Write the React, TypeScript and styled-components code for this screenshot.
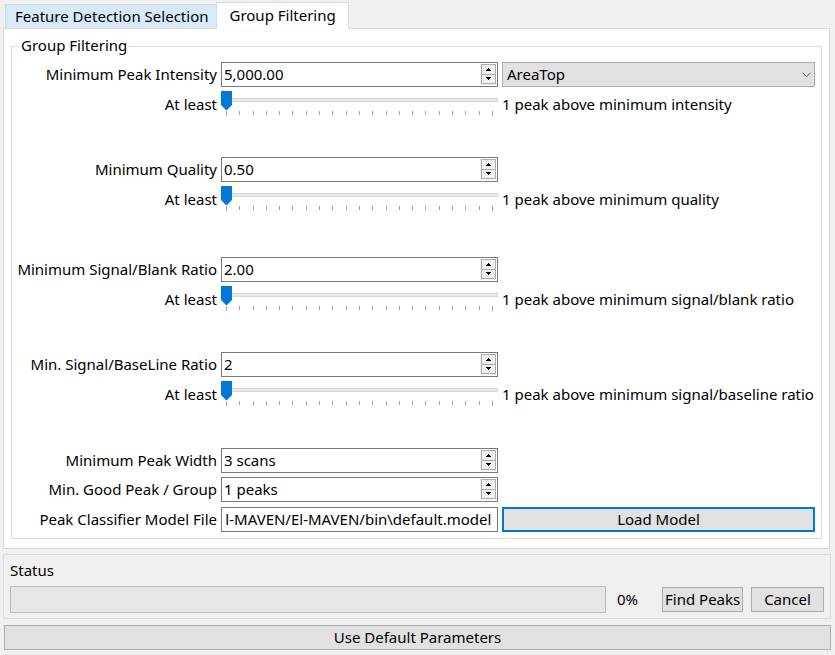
import React, { useEffect, useRef, useState } from 'react';
import styled, { createGlobalStyle, css } from 'styled-components';

const GlobalStyle = createGlobalStyle`
  *, *::before, *::after { box-sizing: border-box; }
  body { margin: 0; background: #f0f0f0; }
  body, button, input, select, output {
    font-family: "Noto Sans", "Open Sans", sans-serif;
    font-size: 15px;
    line-height: 20px;
    color: #000;
  }
`;

const Page = styled.main`
  display: flex;
  flex-direction: column;
  padding: 2px 4px 4px 3px;
`;

const TabList = styled.div`
  display: flex;
  align-items: flex-end;
  padding-left: 2px;
`;

const Tab = styled.button<{ $active: boolean }>`
  position: relative;
  margin: 0;
  border: 1px solid #d9d9d9;
  border-bottom: 0;
  white-space: nowrap;
  ${({ $active }) =>
    $active
      ? css`
          height: 27px;
          padding: 1px 12px 4px;
          margin-bottom: -1px;
          background: #fff;
        `
      : css`
          height: 24px;
          padding: 1px 8px 2px 9px;
          border-right: 0;
          background: #d8eaf9;
        `}
`;

const TabPanel = styled.section`
  margin-right: 1px;
  padding: 7px 7px 9px;
  border: 1px solid #d9d9d9;
  background: #fff;
`;

const Group = styled.fieldset`
  margin: 0;
  min-width: 0;
  padding: 6px 6px 6px 5px;
  border: 1px solid #dcdcdc;
`;

const GroupTitle = styled.legend`
  margin-left: 2px;
  padding: 0 2px;
  height: 20px;
  line-height: 18px;
`;

const FieldRow = styled.div<{ $gap: number }>`
  display: grid;
  grid-template-columns: 200px minmax(0, 277fr) minmax(0, 313fr);
  column-gap: 4px;
  align-items: center;
  min-height: 25px;
  margin-bottom: ${({ $gap }) => $gap}px;
`;

const SliderRow = styled(FieldRow)`
  height: 27px;
`;

const FieldLabel = styled.label`
  padding-bottom: 2px;
  text-align: right;
  white-space: nowrap;
`;

const PeakNote = styled.output`
  padding-bottom: 2px;
  white-space: nowrap;
`;

const SpinFrame = styled.div`
  display: flex;
  height: 25px;
  padding: 1px;
  border: 1px solid #7a7a7a;
  background: #fff;
`;

const SpinInput = styled.input`
  flex: 1;
  min-width: 0;
  padding: 0 1px 2px;
  border: 0;
  outline: 0;
  background: transparent;
`;

const SpinButtons = styled.div`
  display: flex;
  flex-direction: column;
  width: 16px;
  padding: 0 0 1px 1px;
  background: #f0f0f0;
`;

const SpinButton = styled.button`
  display: flex;
  flex: 1;
  align-items: center;
  justify-content: center;
  padding: 0;
  border: 1px solid #acacac;
  background: #f0f0f0;
  & + & { margin-top: -1px; }
`;

const PathInput = styled.input`
  width: 100%;
  height: 25px;
  padding: 0 6px 2px 4px;
  border: 1px solid #7a7a7a;
  background: #fff;
`;

const SliderBox = styled.div`
  display: flex;
  flex-direction: column;
  height: 27px;
`;

const Range = styled.input`
  appearance: none;
  display: block;
  width: 100%;
  height: 18px;
  margin: 0;
  background: transparent;
  &::-webkit-slider-runnable-track {
    height: 4px;
    border: 1px solid #d6d6d6;
    background: #e7eaea;
  }
  &::-webkit-slider-thumb {
    appearance: none;
    width: 11px;
    height: 19px;
    margin-top: -8px;
    margin-left: -1px;
    background: #0078d7;
    clip-path: polygon(0 0, 100% 0, 100% 74%, 55% 100%, 45% 100%, 0 74%);
  }
`;

const Ticks = styled.div`
  display: flex;
  justify-content: space-between;
  margin-top: 2px;
  padding: 0 5px;
`;

const Tick = styled.span`
  width: 1px;
  height: 4px;
  background: #a3a39b;
  &:first-child, &:last-child { height: 5px; }
`;

const SelectFrame = styled.div`
  display: grid;
  align-items: center;
  & > * { grid-area: 1 / 1; }
  & > svg { justify-self: end; margin-right: 4px; pointer-events: none; }
`;

const Select = styled.select`
  appearance: none;
  width: 100%;
  height: 25px;
  padding: 0 20px 2px 4px;
  border: 1px solid #adadad;
  border-radius: 0;
  background: #e1e1e1;
`;

const Button = styled.button<{ $primary?: boolean }>`
  height: 25px;
  padding: 0 2px 2px;
  border: ${({ $primary }) => ($primary ? '2px solid #0078d7' : '1px solid #adadad')};
  background: #e1e1e1;
  line-height: 20px;
  white-space: nowrap;
`;

const StatusPanel = styled.section`
  display: flex;
  flex-direction: column;
  gap: 5px;
  margin-top: 5px;
  padding: 6px 6px 5px;
  border: 1px solid #dcdcdc;
`;

const StatusRow = styled.div`
  display: grid;
  grid-template-columns: minmax(0, 1fr) 40px 81px 73px;
  column-gap: 8px;
  align-items: center;
`;

const Progress = styled.progress`
  appearance: none;
  display: block;
  width: 100%;
  height: 27px;
  border: 1px solid #bcbcbc;
  background: #e6e6e6;
  &::-webkit-progress-bar { background: #e6e6e6; }
  &::-webkit-progress-value { background: #06b025; }
`;

const Percent = styled.span`
  padding: 0 0 2px 3px;
`;

const StatusTitle = styled.div`
  height: 20px;
  line-height: 18px;
`;

const Footer = styled.footer`
  display: grid;
  margin-top: 6px;
  padding-left: 1px;
`;

const Arrow = ({ down = false }: { down?: boolean }) => (
  <svg width="5" height="3" viewBox="0 0 5 3" shapeRendering="crispEdges" aria-hidden="true">
    <path d={down ? 'M0 0h5v1H0zM1 1h3v1H1zM2 2h1v1H2z' : 'M2 0h1v1H2zM1 1h3v1H1zM0 2h5v1H0z'} />
  </svg>
);

type SpinProps = {
  id: string;
  label: string;
  initial: number;
  step?: number;
  format: (n: number) => string;
  gap: number;
  children?: React.ReactNode;
};

function SpinField({ id, label, initial, step = 1, format, gap, children }: SpinProps) {
  const [value, setValue] = useState(initial);
  const [text, setText] = useState(format(initial));
  const change = (by: number) => {
    const next = Math.max(0, value + by);
    setValue(next);
    setText(format(next));
  };
  const commit = () => {
    const parsed = parseFloat(text.replace(/,/g, ''));
    const next = Number.isNaN(parsed) ? value : parsed;
    setValue(next);
    setText(format(next));
  };
  return (
    <FieldRow $gap={gap}>
      <FieldLabel htmlFor={id}>{label}</FieldLabel>
      <SpinFrame>
        <SpinInput id={id} value={text} onChange={(e) => setText(e.target.value)} onBlur={commit} />
        <SpinButtons>
          <SpinButton type="button" aria-label="Increase" onClick={() => change(step)}>
            <Arrow />
          </SpinButton>
          <SpinButton type="button" aria-label="Decrease" onClick={() => change(-step)}>
            <Arrow down />
          </SpinButton>
        </SpinButtons>
      </SpinFrame>
      {children}
    </FieldRow>
  );
}

function PeakSlider({ id, subject, gap }: { id: string; subject: string; gap: number }) {
  const [peaks, setPeaks] = useState(1);
  return (
    <SliderRow $gap={gap}>
      <FieldLabel htmlFor={id}>At least</FieldLabel>
      <SliderBox>
        <Range id={id} type="range" min={1} max={21} value={peaks} onChange={(e) => setPeaks(Number(e.target.value))} />
        <Ticks aria-hidden="true">
          {Array.from({ length: 21 }, (_, i) => (
            <Tick key={i} />
          ))}
        </Ticks>
      </SliderBox>
      <PeakNote htmlFor={id}>
        {peaks} {peaks === 1 ? 'peak' : 'peaks'} above minimum {subject}
      </PeakNote>
    </SliderRow>
  );
}

function ModelFileRow() {
  const ref = useRef<HTMLInputElement>(null);
  useEffect(() => {
    if (ref.current) ref.current.scrollLeft = ref.current.scrollWidth;
  }, []);
  return (
    <FieldRow $gap={0}>
      <FieldLabel htmlFor="model-file">Peak Classifier Model File</FieldLabel>
      <PathInput id="model-file" ref={ref} defaultValue={'El-MAVEN/El-MAVEN/bin\\default.model'} />
      <Button type="button" $primary>
        Load Model
      </Button>
    </FieldRow>
  );
}

const twoDecimals = (n: number) =>
  n.toLocaleString('en-US', { minimumFractionDigits: 2, maximumFractionDigits: 2 });

export default function App() {
  return (
    <>
      <GlobalStyle />
      <Page>
        <TabList role="tablist">
          <Tab type="button" role="tab" aria-selected={false} $active={false}>
            Feature Detection Selection
          </Tab>
          <Tab type="button" role="tab" aria-selected $active>
            Group Filtering
          </Tab>
        </TabList>
        <TabPanel role="tabpanel">
          <Group>
            <GroupTitle>Group Filtering</GroupTitle>
            <SpinField id="intensity" label="Minimum Peak Intensity" initial={5000} step={100} format={twoDecimals} gap={4}>
              <SelectFrame>
                <Select aria-label="Intensity type" defaultValue="AreaTop">
                  <option>AreaTop</option>
                </Select>
                <svg width="9" height="6" viewBox="0 0 9 6" fill="none" stroke="#505050" aria-hidden="true">
                  <path d="M.5.7l4 4 4-4" />
                </svg>
              </SelectFrame>
            </SpinField>
            <PeakSlider id="intensity-peaks" subject="intensity" gap={39} />
            <SpinField id="quality" label="Minimum Quality" initial={0.5} step={0.1} format={twoDecimals} gap={4} />
            <PeakSlider id="quality-peaks" subject="quality" gap={44} />
            <SpinField id="blank" label="Minimum Signal/Blank Ratio" initial={2} format={twoDecimals} gap={4} />
            <PeakSlider id="blank-peaks" subject="signal/blank ratio" gap={39} />
            <SpinField id="baseline" label="Min. Signal/BaseLine Ratio" initial={2} format={String} gap={4} />
            <PeakSlider id="baseline-peaks" subject="signal/baseline ratio" gap={40} />
            <SpinField id="width" label="Minimum Peak Width" initial={3} format={(n) => `${n} scans`} gap={4} />
            <SpinField id="good" label="Min. Good Peak / Group" initial={1} format={(n) => `${n} peaks`} gap={5} />
            <ModelFileRow />
          </Group>
        </TabPanel>
        <StatusPanel>
          <StatusTitle id="status-title">Status</StatusTitle>
          <StatusRow>
            <Progress aria-labelledby="status-title" value={0} max={100} />
            <Percent>0%</Percent>
            <Button type="button">Find Peaks</Button>
            <Button type="button">Cancel</Button>
          </StatusRow>
        </StatusPanel>
        <Footer>
          <Button type="button">Use Default Parameters</Button>
        </Footer>
      </Page>
    </>
  );
}
